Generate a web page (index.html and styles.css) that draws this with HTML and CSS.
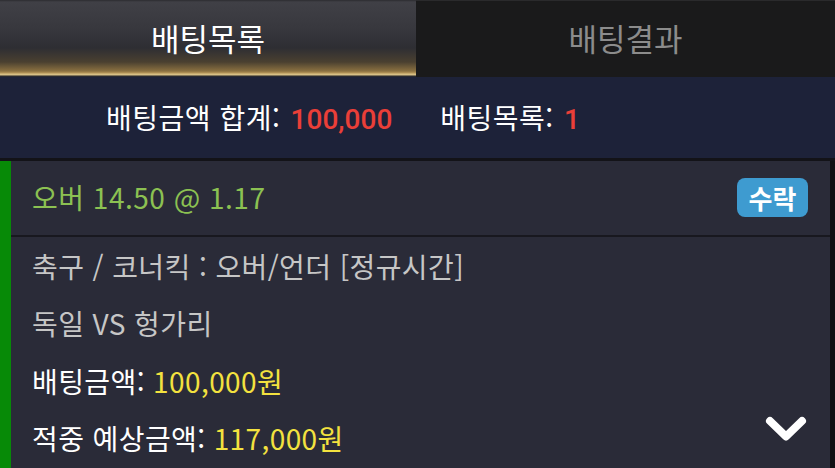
FILE: index.html
```html
<!DOCTYPE html>
<html lang="ko">
<head>
<meta charset="utf-8">
<link rel="stylesheet" href="styles.css">
</head>
<body>
<div class="page">
  <div class="tabs">
    <div class="tab tab-active">배팅목록</div>
    <div class="tab tab-idle">배팅결과</div>
  </div>
  <div class="summary">
    <span class="sum-item">배팅금액 합계: <b class="red">100,000</b></span>
    <span class="sum-item">배팅목록: <b class="red">1</b></span>
  </div>
  <div class="sep"></div>
  <div class="card">
    <div class="card-head">
      <span class="pick">오버 14.50 @ 1.17</span>
      <span class="badge">수락</span>
    </div>
    <div class="card-body">
      <div class="row gray">축구 / 코너킥 : 오버/언더 [정규시간]</div>
      <div class="row gray">독일 VS 헝가리</div>
      <div class="row">배팅금액: <span class="yellow">100,000원</span></div>
      <div class="row">적중 예상금액: <span class="yellow">117,000원</span>
        <svg class="chev" width="42" height="28" viewBox="0 0 42 28"><path d="M5 5 L21 20.5 L37 5" fill="none" stroke="#fff" stroke-width="8" stroke-linecap="round" stroke-linejoin="round"/></svg>
      </div>
    </div>
  </div>
</div>
</body>
</html>
```
FILE: styles.css
```css
* { box-sizing: border-box; }
html, body { margin: 0; padding: 0; }
body {
  background: #111114;
  font-family: "Noto Sans CJK KR", "Noto Sans", sans-serif;
  width: 835px;
  height: 468px;
  overflow: hidden;
}
.page { display: flex; flex-direction: column; }
.tabs { display: flex; height: 77px; }
.tab {
  display: flex; align-items: center; justify-content: center;
  font-size: 31px; padding-bottom: 3px;
}
.tab-active {
  width: 416px;
  color: #fff;
  background: linear-gradient(to bottom, #2c2c30 0px, #404046 2px, #37373d 30px, #2e2e33 48px, #4a4030 62px, #8a7040 71px, #b49458 73px, #d8c084 74px, #d8c084 75px, #2a2a30 76px);
}
.tab-idle {
  flex: 1;
  color: #8c8c8c;
  background: #1a1a1b;
  border-top: 1px solid #2a2a2c;
}
.summary {
  height: 81px;
  background: #1d2239;
  display: flex; align-items: center;
  padding-left: 106px;
  gap: 48px;
  font-size: 28px;
  letter-spacing: 0.5px;
  color: #fff;
  padding-bottom: 2px;
}
.red { color: #ea3f38; font-weight: 500; font-size: 28px; letter-spacing: 0; margin-left: 2px; font-family: Roboto, "Noto Sans CJK KR", sans-serif; }
.sep { height: 3px; background: #131318; }
.card {
  width: 830px;
  background: #2a2b38;
  border-left: 11px solid #078a07;
  height: 307px;
}
.card-head {
  height: 76px;
  display: flex; align-items: center; justify-content: space-between;
  padding: 0 22px 0 21px;
  border-bottom: 2px solid #18181f;
}
.pick { color: #8cc152; font-size: 28px; letter-spacing: 0.5px; padding-bottom: 2px; }
.badge {
  background: #3e9bd0;
  color: #fff;
  font-weight: 700;
  font-size: 26px;
  width: 71px; height: 39px;
  border-radius: 8px;
  display: flex; align-items: center; justify-content: center;
  margin-top: -1px;
}
.card-body { padding: 0 23px 0 21px; }
.row {
  height: 57.5px;
  display: flex; align-items: center;
  font-size: 28px;
  letter-spacing: 0.4px;
  color: #fff;
  white-space: pre;
}
.gray { color: #c6c6c6; }
.yellow { color: #f3e23f; }
.chev { margin-left: auto; align-self: flex-start; margin-top: 6px; }
```
